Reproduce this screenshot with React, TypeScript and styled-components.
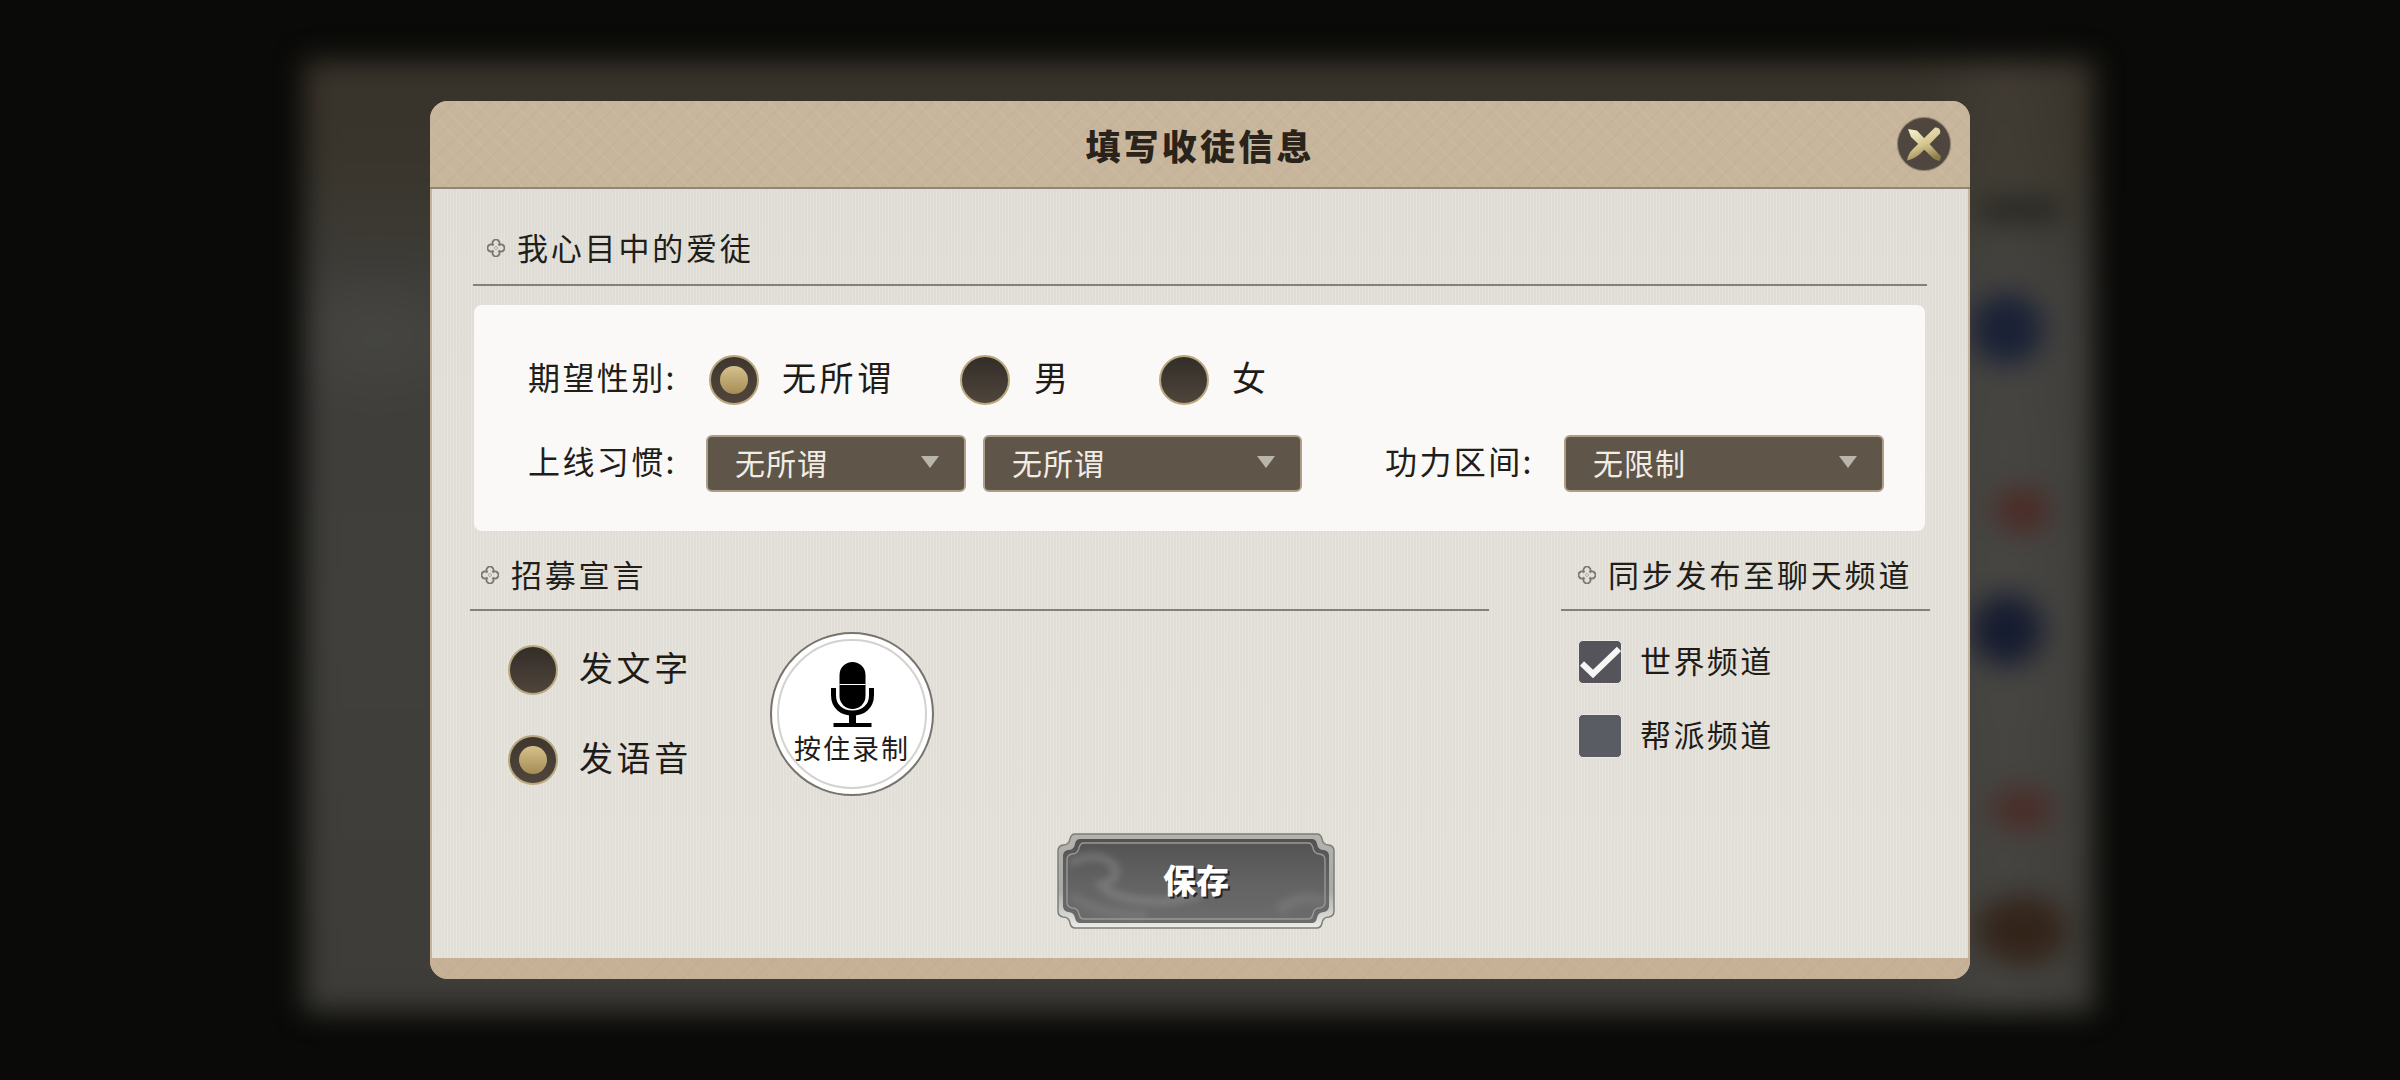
import styled, { createGlobalStyle } from "styled-components";

const GlobalStyle = createGlobalStyle`
  html, body {
    margin: 0;
    padding: 0;
    background: #0a0a08;
  }
  * {
    box-sizing: border-box;
  }
`;

const FONT = `"Noto Sans CJK SC", "Noto Sans", sans-serif`;

const Stage = styled.div`
  position: relative;
  width: 2400px;
  height: 1080px;
  overflow: hidden;
  display: flex;
  align-items: center;
  justify-content: center;
  background: #0a0a08;
  font-family: ${FONT};
`;

// the game page behind the dialog, blurred out
const BlurredPage = styled.div`
  position: absolute;
  left: 304px;
  top: 60px;
  width: 1790px;
  height: 952px;
  display: flex;
  flex-direction: column;
  align-items: flex-end;
  padding: 142px 40px 0 0;
  filter: blur(14px);
  background:
    radial-gradient(ellipse 120px 80px at 73px 277px, rgba(84, 84, 82, 0.35), transparent),
    linear-gradient(90deg, transparent 90%, rgba(255, 255, 255, 0.04) 95%, transparent),
    linear-gradient(180deg, #39332a 0, #39352c 100px, #3e3d3a 240px, #403f3c 560px, #3d3c38 100%);
`;

const Blob = styled.div<{ $w: number; $h: number; $color: string; $top: number; $right: number }>`
  width: ${(p) => p.$w}px;
  height: ${(p) => p.$h}px;
  margin-top: ${(p) => p.$top}px;
  margin-right: ${(p) => p.$right}px;
  border-radius: 50%;
  background: ${(p) => p.$color};
`;

const DarkBar = styled.div`
  width: 80px;
  height: 16px;
  margin-right: -6px;
  background: #1c1c18;
`;

const Modal = styled.div`
  position: relative;
  width: 1540px;
  height: 878px;
  display: flex;
  flex-direction: column;
  border-radius: 18px;
  overflow: hidden;
  background-color: #c6b298;
`;

const Header = styled.div`
  position: relative;
  flex: 0 0 88px;
  display: flex;
  align-items: center;
  justify-content: center;
  border-bottom: 2px solid #8f8775;
  background-color: #c8b69c;
  background-image:
    repeating-linear-gradient(45deg, rgba(255, 255, 255, 0.04) 0 2px, transparent 2px 13px),
    repeating-linear-gradient(-45deg, rgba(120, 95, 60, 0.04) 0 2px, transparent 2px 13px);
`;

const Title = styled.h1`
  margin: 0;
  font-size: 35px;
  font-weight: 900;
  letter-spacing: 3.2px;
  color: #29231b;
`;

const CloseButton = styled.button`
  position: absolute;
  top: 17px;
  right: 20px;
  width: 52px;
  height: 52px;
  padding: 0;
  border: none;
  border-radius: 50%;
  background: #4f473f;
  box-shadow: 0 0 1px 1px rgba(70, 60, 45, 0.5);
  svg {
    display: block;
  }
`;

const Body = styled.div`
  flex: 1;
  margin: 0 2px;
  padding: 0 41px;
  background-color: #e2dfd7;
  background-image:
    repeating-linear-gradient(90deg, rgba(255, 255, 255, 0.12) 0 1px, rgba(120, 115, 100, 0.025) 1px 3px),
    linear-gradient(180deg, #e0ded6, #e3e0d9 30%, #e4e1da);
`;

const Footer = styled.div`
  flex: 0 0 21px;
  background-color: #c6b196;
  background-image:
    repeating-linear-gradient(45deg, rgba(255, 255, 255, 0.03) 0 2px, transparent 2px 13px),
    repeating-linear-gradient(-45deg, rgba(120, 95, 60, 0.03) 0 2px, transparent 2px 13px);
`;

const SectionHead = styled.div<{ $inset: number; $top: number; $bottom: number }>`
  display: flex;
  align-items: center;
  gap: 12px;
  height: ${(p) => p.$top + p.$bottom + 42}px;
  padding: ${(p) => p.$top}px 0 ${(p) => p.$bottom}px ${(p) => p.$inset}px;
  border-bottom: 2px solid #85817a;
`;

const SectionTitle = styled.h2`
  margin: 0 0 3px;
  font-size: 31px;
  line-height: 40px;
  font-weight: 400;
  letter-spacing: 2.8px;
  color: #211d19;
  white-space: nowrap;
`;

const Panel = styled.div`
  margin: 19px 2px 0 1px;
  height: 226px;
  padding: 50px 0 0 54px;
  display: flex;
  flex-direction: column;
  gap: 30px;
  border-radius: 8px;
  background: #faf9f7;
`;

const Row = styled.div<{ $height: number }>`
  display: flex;
  align-items: center;
  height: ${(p) => p.$height}px;
`;

const FieldLabel = styled.span<{ $width: number; $left?: number }>`
  flex: 0 0 ${(p) => p.$width}px;
  margin-left: ${(p) => p.$left ?? 0}px;
  padding-bottom: 8px;
  font-size: 32px;
  letter-spacing: 2.4px;
  color: #211d19;
  white-space: nowrap;
`;

const RadioOption = styled.label<{ $width?: number; $gap: number }>`
  display: flex;
  align-items: center;
  gap: ${(p) => p.$gap}px;
  width: ${(p) => (p.$width ? `${p.$width}px` : "auto")};
`;

const RadioMark = styled.span<{ $on?: boolean }>`
  flex: 0 0 50px;
  width: 50px;
  height: 50px;
  display: flex;
  align-items: center;
  justify-content: center;
  border-radius: 50%;
  border: 2px solid #b9a97f;
  background: ${(p) =>
    p.$on
      ? "linear-gradient(180deg, #3f372f, #4f453b)"
      : "linear-gradient(180deg, #332e29, #4f453b)"};
`;

const RadioDot = styled.span`
  width: 28px;
  height: 28px;
  border-radius: 50%;
  background: linear-gradient(180deg, #d6c08c, #a68d57);
`;

const RadioText = styled.span`
  padding-bottom: 6px;
  font-size: 34px;
  line-height: 40px;
  letter-spacing: 3.6px;
  color: #1f1b17;
  white-space: nowrap;
`;

const Select = styled.div<{ $width: number; $left?: number }>`
  flex: 0 0 ${(p) => p.$width}px;
  height: 57px;
  margin-left: ${(p) => p.$left ?? 0}px;
  display: flex;
  align-items: center;
  justify-content: space-between;
  padding: 0 25px 3px 27px;
  border: 2px solid #ab9f88;
  border-radius: 6px;
  background: #5f5549;
  font-size: 30px;
  letter-spacing: 1px;
  color: #f1ede5;
`;

const Caret = styled.span`
  width: 0;
  height: 0;
  border-left: 9px solid transparent;
  border-right: 9px solid transparent;
  border-top: 12px solid #b9b5ab;
`;

const Columns = styled.div`
  display: grid;
  grid-template-columns: 1019px 369px;
  gap: 72px;
  margin: 0 -3px;
`;

const VoiceArea = styled.div`
  display: flex;
  align-items: flex-start;
  padding: 21px 0 0 38px;
`;

const ModeList = styled.div`
  flex: 0 0 262px;
  margin-top: 13px;
  display: flex;
  flex-direction: column;
  gap: 40px;
`;

const RecordButton = styled.button`
  position: relative;
  width: 164px;
  height: 164px;
  padding: 28px 0 0;
  display: flex;
  flex-direction: column;
  align-items: center;
  border: 2px solid #77736d;
  border-radius: 50%;
  background: #fff;
  font-family: ${FONT};
  &::before {
    content: "";
    position: absolute;
    inset: 5px;
    border: 2px solid #d4d2ce;
    border-radius: 50%;
  }
  svg {
    display: block;
  }
`;

const RecordText = styled.span`
  margin-top: 5px;
  font-size: 27px;
  line-height: 32px;
  letter-spacing: 2px;
  color: #1f1b17;
  white-space: nowrap;
`;

const ChannelList = styled.div`
  padding: 29px 0 0 17px;
  display: flex;
  flex-direction: column;
  gap: 30px;
`;

const Channel = styled.label`
  display: flex;
  align-items: center;
  gap: 18px;
  height: 44px;
`;

const CheckBox = styled.span<{ $on?: boolean }>`
  width: 44px;
  height: 44px;
  border-radius: 5px;
  border: 1px solid #ece9e3;
  background: ${(p) => (p.$on ? "#55545a" : "#5a5c64")};
  svg {
    display: block;
  }
`;

const ChannelText = styled.span`
  padding-bottom: 6px;
  font-size: 31px;
  letter-spacing: 2.4px;
  color: #1f1b17;
  white-space: nowrap;
`;

const SaveRow = styled.div`
  display: flex;
  justify-content: center;
  margin: 37px 8px 0 0;
`;

const SaveButton = styled.button`
  position: relative;
  width: 278px;
  height: 96px;
  padding: 0 0 4px;
  display: flex;
  align-items: center;
  justify-content: center;
  border: none;
  background: transparent;
  font-family: ${FONT};
  font-size: 33px;
  font-weight: 900;
  color: #fff;
  text-shadow: 2px 2px 0 #26262a;
  svg {
    position: absolute;
    inset: 0;
  }
  span {
    position: relative;
  }
`;

const Quatrefoil = () => (
  <svg width="18" height="18" viewBox="0 0 18 18" fill="none" style={{ flex: "0 0 18px" }}>
    <path
      d="M6.5 6.5A3.5 3.5 0 1 1 11.5 6.5A3.5 3.5 0 1 1 11.5 11.5A3.5 3.5 0 1 1 6.5 11.5A3.5 3.5 0 1 1 6.5 6.5Z"
      stroke="#7a7771"
      strokeWidth="1.9"
    />
    <path d="M9 7.2L10.8 9L9 10.8L7.2 9Z" stroke="#a09d97" strokeWidth="0.9" />
  </svg>
);

const CloseIcon = () => (
  <svg width="52" height="52" viewBox="0 0 52 52">
    <defs>
      <linearGradient id="closeGold" x1="0.2" y1="0" x2="0.6" y2="1">
        <stop offset="0" stopColor="#f4eccb" />
        <stop offset="0.55" stopColor="#d4c690" />
        <stop offset="1" stopColor="#8c7c48" />
      </linearGradient>
    </defs>
    <path d="M10 11L19 12.5L43 38.5L41.5 43L36 41L13 19Z" fill="url(#closeGold)" />
    <path d="M37 9.5Q40 9 41.5 11Q43 13 42 15.5L22 36Q16 41 9 42.5Q10 36 15 31Z" fill="url(#closeGold)" />
  </svg>
);

const MicIcon = () => (
  <svg width="43" height="65" viewBox="0 0 43 65">
    <rect x="8.5" y="0" width="26" height="47" rx="13" fill="#000" />
    <rect x="8.5" y="22" width="26" height="1" fill="#fff" />
    <path d="M2.5 26V33C2.5 45 11 51 21.5 51C32 51 40.5 45 40.5 33V26" fill="none" stroke="#000" strokeWidth="5" />
    <rect x="18" y="50" width="7" height="11" fill="#000" />
    <rect x="2.5" y="61" width="38" height="4" fill="#000" />
  </svg>
);

const CheckMark = () => (
  <svg width="42" height="42" viewBox="0 0 42 42">
    <path d="M3 22.5L14 33L40 8" fill="none" stroke="#f6f6f4" strokeWidth="6" />
  </svg>
);

// frame outline with the notched corners, i = inset from the button's edge
const framePath = (i: number) => {
  const l = 1 + i;
  const r = 277 - i;
  const t = 1 + i;
  const b = 95 - i;
  return [
    `M${l + 17} ${t}H${r - 17}`,
    `Q${r - 13} ${t} ${r - 12} ${t + 5}Q${r - 11} ${t + 11} ${r - 5} ${t + 11}Q${r} ${t + 12} ${r} ${t + 17}`,
    `V${b - 17}`,
    `Q${r} ${b - 12} ${r - 5} ${b - 11}Q${r - 11} ${b - 11} ${r - 12} ${b - 5}Q${r - 13} ${b} ${r - 17} ${b}`,
    `H${l + 17}`,
    `Q${l + 13} ${b} ${l + 12} ${b - 5}Q${l + 11} ${b - 11} ${l + 5} ${b - 11}Q${l} ${b - 12} ${l} ${b - 17}`,
    `V${t + 17}`,
    `Q${l} ${t + 12} ${l + 5} ${t + 11}Q${l + 11} ${t + 11} ${l + 12} ${t + 5}Q${l + 13} ${t} ${l + 17} ${t}Z`,
  ].join("");
};

const SaveFrame = () => (
  <svg width="278" height="96" viewBox="0 0 278 96">
    <defs>
      <linearGradient id="saveEdge" x1="0" y1="0" x2="0" y2="1">
        <stop offset="0" stopColor="#b4b3ae" />
        <stop offset="0.6" stopColor="#a9a9a6" />
        <stop offset="1" stopColor="#ecece9" />
      </linearGradient>
      <linearGradient id="saveFill" x1="0" y1="0" x2="0" y2="1">
        <stop offset="0" stopColor="#525252" />
        <stop offset="0.5" stopColor="#626262" />
        <stop offset="1" stopColor="#6c6c6c" />
      </linearGradient>
      <filter id="saveCloud" x="-20%" y="-40%" width="140%" height="180%">
        <feGaussianBlur stdDeviation="3" />
      </filter>
      <clipPath id="saveClip">
        <path d={framePath(5)} />
      </clipPath>
    </defs>
    <path d={framePath(0)} fill="url(#saveEdge)" stroke="#7d7d7a" strokeWidth="1.5" />
    <path d={framePath(5)} fill="url(#saveFill)" />
    <g clipPath="url(#saveClip)">
      <g filter="url(#saveCloud)" fill="none" stroke="#a2a2a2">
        <path d="M12 30Q44 16 58 34Q62 46 44 52Q56 66 92 68Q118 70 142 62" strokeWidth="9" opacity="0.3" />
        <path d="M14 62Q40 82 90 82" strokeWidth="10" opacity="0.18" />
        <path d="M222 78Q240 60 268 68" strokeWidth="12" opacity="0.2" />
      </g>
    </g>
    <path d={framePath(9)} fill="none" stroke="#989896" strokeWidth="1.4" />
  </svg>
);

const App = () => {
  return (
    <Stage>
      <GlobalStyle />
      <BlurredPage>
        <DarkBar />
        <Blob $w={72} $h={72} $color="#1a2136" $top={75} $right={11} />
        <Blob $w={56} $h={44} $color="#4c2a25" $top={123} $right={4} />
        <Blob $w={72} $h={72} $color="#161c30" $top={62} $right={11} />
        <Blob $w={60} $h={44} $color="#4a2c27" $top={121} $right={2} />
        <Blob $w={92} $h={70} $color="#33241a" $top={64} $right={-14} />
      </BlurredPage>

      <Modal>
        <Header>
          <Title>填写收徒信息</Title>
          <CloseButton aria-label="关闭">
            <CloseIcon />
          </CloseButton>
        </Header>

        <Body>
          <SectionHead $inset={14} $top={39} $bottom={16}>
            <Quatrefoil />
            <SectionTitle>我心目中的爱徒</SectionTitle>
          </SectionHead>

          <Panel>
            <Row $height={50}>
              <FieldLabel $width={181}>期望性别:</FieldLabel>
              <RadioOption $width={251} $gap={23}>
                <RadioMark $on>
                  <RadioDot />
                </RadioMark>
                <RadioText>无所谓</RadioText>
              </RadioOption>
              <RadioOption $width={199} $gap={24}>
                <RadioMark />
                <RadioText>男</RadioText>
              </RadioOption>
              <RadioOption $gap={23}>
                <RadioMark />
                <RadioText>女</RadioText>
              </RadioOption>
            </Row>
            <Row $height={57}>
              <FieldLabel $width={178}>上线习惯:</FieldLabel>
              <Select $width={260}>
                无所谓
                <Caret />
              </Select>
              <Select $width={319} $left={17}>
                无所谓
                <Caret />
              </Select>
              <FieldLabel $width={179} $left={83}>
                功力区间:
              </FieldLabel>
              <Select $width={320}>
                无限制
                <Caret />
              </Select>
            </Row>
          </Panel>

          <Columns>
            <div>
              <SectionHead $inset={11} $top={24} $bottom={14}>
                <Quatrefoil />
                <SectionTitle>招募宣言</SectionTitle>
              </SectionHead>
              <VoiceArea>
                <ModeList>
                  <RadioOption $gap={21}>
                    <RadioMark />
                    <RadioText>发文字</RadioText>
                  </RadioOption>
                  <RadioOption $gap={21}>
                    <RadioMark $on>
                      <RadioDot />
                    </RadioMark>
                    <RadioText>发语音</RadioText>
                  </RadioOption>
                </ModeList>
                <RecordButton>
                  <MicIcon />
                  <RecordText>按住录制</RecordText>
                </RecordButton>
              </VoiceArea>
            </div>
            <div>
              <SectionHead $inset={17} $top={24} $bottom={14}>
                <Quatrefoil />
                <SectionTitle>同步发布至聊天频道</SectionTitle>
              </SectionHead>
              <ChannelList>
                <Channel>
                  <CheckBox $on>
                    <CheckMark />
                  </CheckBox>
                  <ChannelText>世界频道</ChannelText>
                </Channel>
                <Channel>
                  <CheckBox />
                  <ChannelText>帮派频道</ChannelText>
                </Channel>
              </ChannelList>
            </div>
          </Columns>

          <SaveRow>
            <SaveButton>
              <SaveFrame />
              <span>保存</span>
            </SaveButton>
          </SaveRow>
        </Body>

        <Footer />
      </Modal>
    </Stage>
  );
};

export default App;
